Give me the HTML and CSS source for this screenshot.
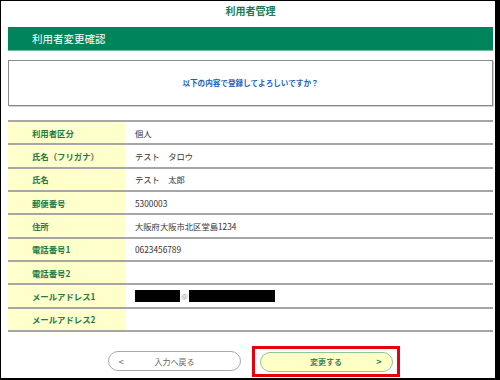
FILE: index.html
```html
<!DOCTYPE html>
<html lang="ja">
<head>
<meta charset="utf-8">
<title>利用者管理</title>
<link rel="stylesheet" href="styles.css">
</head>
<body>
<div class="frame">
  <h1 class="title">利用者管理</h1>
  <div class="bar">利用者変更確認</div>
  <div class="confirm">以下の内容で登録してよろしいですか？</div>
  <div class="info">
    <div class="row"><div class="label">利用者区分</div><div class="value">個人</div></div>
    <div class="row"><div class="label">氏名（フリガナ）</div><div class="value">テスト　タロウ</div></div>
    <div class="row"><div class="label">氏名</div><div class="value">テスト　太郎</div></div>
    <div class="row"><div class="label">郵便番号</div><div class="value">5300003</div></div>
    <div class="row"><div class="label">住所</div><div class="value">大阪府大阪市北区堂島1234</div></div>
    <div class="row"><div class="label">電話番号1</div><div class="value">0623456789</div></div>
    <div class="row"><div class="label">電話番号2</div><div class="value"></div></div>
    <div class="row"><div class="label">メールアドレス1</div><div class="value"><span class="mask mask-a"></span><span class="at">@</span><span class="mask mask-b"></span></div></div>
    <div class="row"><div class="label">メールアドレス2</div><div class="value"></div></div>
  </div>
  <div class="actions">
    <button class="btn back" type="button"><span class="arrow">&lt;</span><span class="btn-label">入力へ戻る</span><span class="arrow spacer"></span></button>
    <span class="highlight">
      <button class="btn next" type="button"><span class="arrow spacer"></span><span class="btn-label">変更する</span><span class="arrow">&gt;</span></button>
    </span>
  </div>
</div>
</body>
</html>
```

FILE: styles.css
```css
* { box-sizing: border-box; }

html, body {
  margin: 0;
  padding: 0;
  background: #fff;
}

body {
  font-family: "Noto Sans CJK JP", "Noto Sans", sans-serif;
}

.frame {
  width: 500px;
  height: 380px;
  border-top: 1px solid #000;
  border-left: 1px solid #000;
  border-right: 5px solid #000;
  border-bottom: 2px solid #000;
  padding: 0 2px 0 7px;
  overflow: hidden;
}

.title {
  margin: 0;
  height: 20px;
  line-height: 20px;
  text-align: center;
  font-size: 10px;
  font-weight: bold;
  color: #1b7a4e;
}

.bar {
  margin-top: 6px;
  height: 24px;
  line-height: 23px;
  padding-left: 24px;
  background: #00845c;
  border-bottom: 1px solid #6fbf9f;
  color: #fff;
  font-size: 10.5px;
}

.confirm {
  margin-top: 9px;
  height: 46px;
  line-height: 44px;
  border: 1px solid #8a8a8a;
  box-shadow: 1px 1px 0 #d0d0d0;
  text-align: center;
  font-size: 7.6px;
  font-weight: bold;
  color: #1a62b8;
}

.info {
  margin-top: 14px;
  border-top: 2px solid #a6a6a6;
}

.row {
  display: flex;
  height: 23.33px;
  border-bottom: 2px solid #a6a6a6;
}

.label {
  width: 118px;
  flex: none;
  background: #ffffcc;
  padding-left: 24px;
  display: flex;
  align-items: center;
  font-size: 8.4px;
  font-weight: bold;
  color: #237a48;
}

.value {
  flex: 1;
  padding-left: 9px;
  display: flex;
  align-items: center;
  font-size: 8.3px;
  color: #333;
}

.mask {
  display: inline-block;
  height: 12px;
  background: #000;
}

.mask-a { width: 45px; }
.mask-b { width: 86px; }

.at {
  width: 9px;
  text-align: center;
  font-size: 7px;
  color: #999;
}

.actions {
  margin-top: 14px;
  display: flex;
  align-items: center;
  padding-left: 100px;
}

.btn {
  width: 133px;
  height: 20px;
  border-radius: 10px;
  border: 1px solid #a8a8a8;
  background: #fff;
  padding: 0 9px;
  display: flex;
  align-items: center;
  font-family: inherit;
  font-size: 8px;
  color: #666;
  cursor: pointer;
}

.btn-label {
  flex: 1;
  text-align: center;
}

.arrow {
  width: 6px;
  font-size: 9px;
  line-height: 1;
}

.back .arrow { color: #555; }

.highlight {
  margin-left: 11px;
  border: 3px solid #e8000b;
  padding: 3px 4px 2px 5px;
  display: flex;
}

.next {
  background: #ffffc6;
  border-color: #8cc79c;
  color: #3a8a5c;
  font-weight: bold;
  padding: 0 10px 0 9px;
}

.next .arrow {
  color: #2f7f55;
  font-weight: bold;
}
```
